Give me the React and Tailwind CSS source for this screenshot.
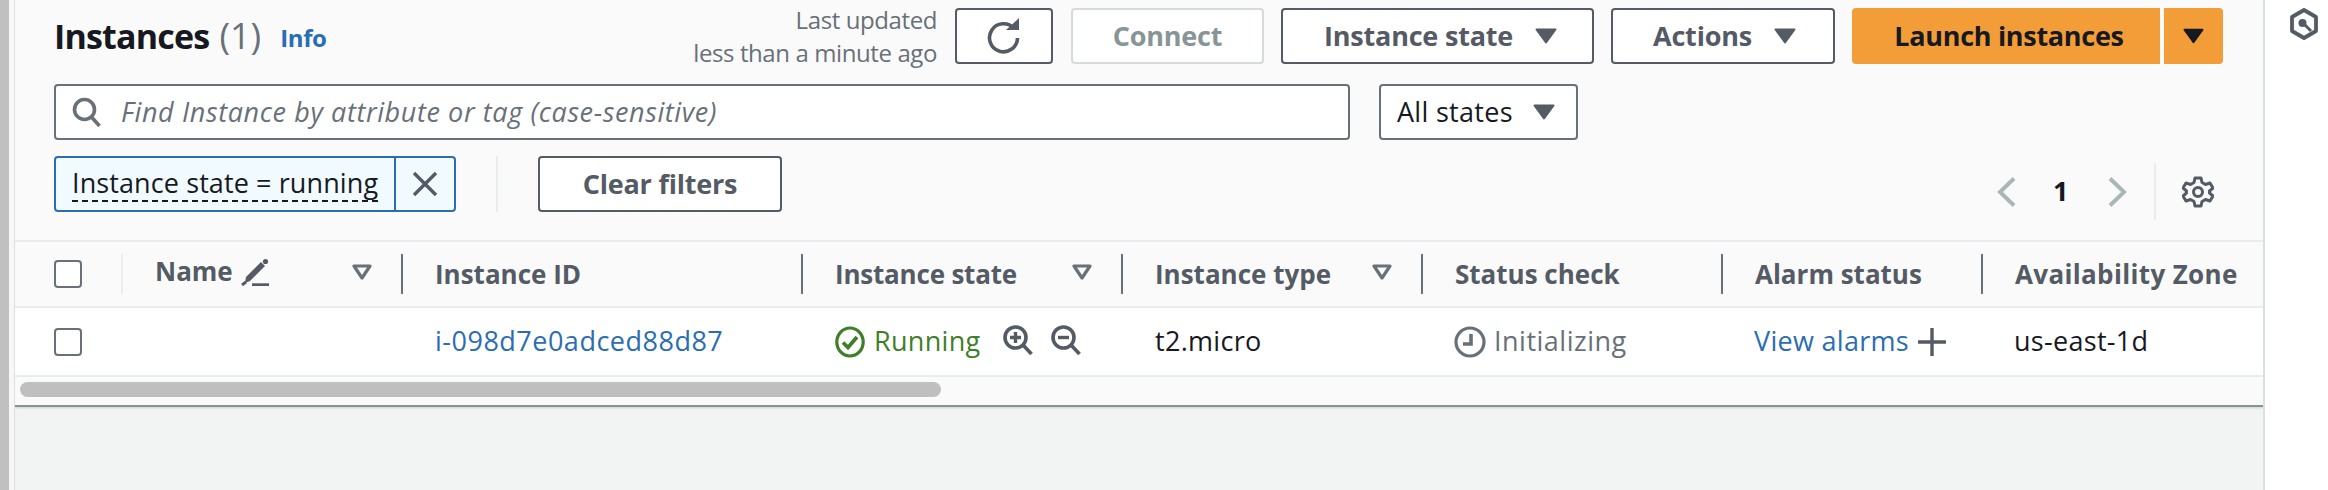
const Caret = ({ className = "", color = "#545b64" }) => (
  <svg viewBox="0 0 22 16" className={`shrink-0 ${className}`}>
    <path d="M1.5 1.5H20.5L11 14.5Z" fill={color} stroke={color} strokeWidth="2" strokeLinejoin="round" />
  </svg>
);

const FilterCaret = () => (
  <svg viewBox="0 0 20 16" className="w-5 h-4 shrink-0">
    <path d="M2 2H18L10 14Z" fill="none" stroke="#687078" strokeWidth="3.2" strokeLinejoin="round" />
  </svg>
);

const Checkbox = () => (
  <span className="block w-[28px] h-[28px] rounded-[4px] border-2 border-[#687078] bg-white" />
);

const Sep = ({ light }) => (
  <span className={`block w-[2px] h-[40px] shrink-0 ${light ? "bg-[#eaeded]" : "bg-[#687078]"}`} />
);

const HeadLabel = ({ children, className = "" }) => (
  <span className={`pl-[32px] text-[26px] font-bold text-[#545b64] whitespace-nowrap ${className}`}>{children}</span>
);

const btn = "h-[56px] shrink-0 flex items-center rounded-[4px] border-2 bg-white text-[27px] font-bold tracking-[-0.2px] whitespace-nowrap";

export default function App() {
  return (
    <div className="w-[2328px] h-[490px] flex overflow-hidden bg-white font-['Open_Sans','Liberation_Sans',sans-serif] text-[#16191f]">
      <div className="w-[9px] shrink-0 bg-[#c0c0c0]" />
      <div className="w-[6px] shrink-0 bg-[#f7f7f7] border-r border-[#dcdfdf]" />
      <main className="w-[2250px] shrink-0 flex flex-col overflow-hidden border-r-2 border-[#dcdfdf] bg-[#f2f3f3]">
        <section className="h-[240px] shrink-0 bg-[#fafafa] pl-[39px] pr-[40px] pt-[8px]">
          <div className="h-[56px] flex items-center">
            <h1 className="text-[34px] font-bold tracking-[-0.8px] leading-none">Instances</h1>
            <span className="ml-[10px] text-[36px] leading-none text-[#687078]">(1)</span>
            <a className="ml-[19px] mt-[4px] text-[24px] font-bold tracking-[-0.4px] text-[#2a6db5]">Info</a>
            <div className="ml-auto text-right text-[24px] tracking-[-0.4px] leading-[33px] text-[#687078]">
              <div>Last updated</div>
              <div>less than a minute ago</div>
            </div>
            <button className={`${btn} ml-[18px] w-[98px] justify-center border-[#545b64]`}>
              <svg viewBox="0 0 36 36" className="w-[36px] h-[36px]">
                <path d="M28 10.5A14 14 0 1 0 31.5 20" fill="none" stroke="#545b64" strokeWidth="3.6" />
                <path d="M20 12H33V0Z" fill="#545b64" />
              </svg>
            </button>
            <button className={`${btn} ml-[18px] w-[193px] justify-center border-[#d5dbdb] text-[#879596]`}>Connect</button>
            <button className={`${btn} ml-[17px] w-[313px] pl-[41px] border-[#545b64] text-[#545b64]`}>
              Instance state
              <Caret className="ml-[22px] w-[22px] h-[16px]" />
            </button>
            <button className={`${btn} ml-[17px] w-[224px] pl-[40px] border-[#545b64] text-[#545b64]`}>
              Actions
              <Caret className="ml-[22px] w-[22px] h-[16px]" />
            </button>
            <div className="ml-[17px] flex gap-[4px]">
              <button className="h-[56px] w-[308px] pl-[6px] flex items-center justify-center rounded-l-[4px] bg-[#f29d38] text-[27px] font-bold tracking-[-0.3px] whitespace-nowrap">
                Launch instances
              </button>
              <button className="h-[56px] w-[59px] flex items-center justify-center rounded-r-[4px] bg-[#f29d38]">
                <Caret color="#16191f" className="w-[21px] h-[16px]" />
              </button>
            </div>
          </div>

          <div className="mt-[20px] h-[56px] flex">
            <div className="w-[1296px] flex items-center rounded-[4px] border-2 border-[#687078] bg-white pl-[16px]">
              <svg viewBox="0 0 30 30" className="w-[30px] h-[30px] shrink-0">
                <circle cx="12.5" cy="12.5" r="10" fill="none" stroke="#687078" strokeWidth="3.6" />
                <path d="M19.5 20L27.5 29" stroke="#687078" strokeWidth="3.6" />
              </svg>
              <span className="ml-[19px] text-[27px] tracking-[0.6px] italic text-[#687078] whitespace-nowrap">
                Find Instance by attribute or tag (case-sensitive)
              </span>
            </div>
            <button className="ml-[29px] w-[199px] flex items-center rounded-[4px] border-2 border-[#687078] bg-white pl-[16px] text-[27px] tracking-[0.3px] whitespace-nowrap">
              All states
              <Caret className="ml-[20px] w-[22px] h-[16px]" />
            </button>
          </div>

          <div className="mt-[16px] h-[56px] flex items-start">
            <div className="w-[402px] h-[56px] flex rounded-[4px] border-2 border-[#2a6db5] bg-[#f1faff]">
              <span className="w-[340px] flex items-center pl-[16px] border-r-2 border-[#2a6db5]">
                <span className="text-[27px] tracking-[0.1px] leading-[34px] whitespace-nowrap border-b-2 border-dashed border-[#16191f]">
                  Instance state = running
                </span>
              </span>
              <span className="flex-1 flex items-center justify-center">
                <svg viewBox="0 0 26 26" className="w-[26px] h-[26px]">
                  <path d="M2 2L24 24M24 2L2 24" stroke="#545b64" strokeWidth="3.4" />
                </svg>
              </span>
            </div>
            <span className="ml-[40px] block w-[2px] h-[56px] bg-[#eaeded]" />
            <button className={`${btn} ml-[40px] w-[244px] justify-center border-[#545b64] text-[#545b64]`}>Clear filters</button>
            <div className="ml-auto mt-[7px] h-[57px] flex items-center">
              <svg viewBox="0 0 19 30" className="w-[19px] h-[30px]">
                <path d="M17 1.5L3 15L17 28.5" fill="none" stroke="#aab7b8" strokeWidth="4" />
              </svg>
              <span className="ml-[37px] w-[16px] text-[27px] font-bold">1</span>
              <svg viewBox="0 0 19 30" className="ml-[39px] w-[19px] h-[30px]">
                <path d="M2 1.5L16 15L2 28.5" fill="none" stroke="#aab7b8" strokeWidth="4" />
              </svg>
              <span className="ml-[27px] block w-[2px] h-[57px] bg-[#eaeded]" />
              <svg viewBox="0 0 32 32" className="ml-[26px] mr-[9px] w-[32px] h-[32px]">
                <path
                  d="M13 2H19L20 6.5L23.5 8.5L28 7L31 12L27.5 15V17L31 20L28 25L23.5 23.5L20 25.5L19 30H13L12 25.5L8.5 23.5L4 25L1 20L4.500 17V15L1 12L4 7L8.500 8.500L12 6.500Z"
                  fill="none" stroke="#545b64" strokeWidth="3" strokeLinejoin="round"
                />
                <circle cx="16" cy="16" r="4.500" fill="none" stroke="#545b64" strokeWidth="3" />
              </svg>
            </div>
          </div>
        </section>

        <div className="border-t-2 border-b-2 border-[#eaeded] bg-[#fafafa] h-[68px] shrink-0 grid grid-cols-[106px_280px_400px_320px_300px_300px_260px_283px] items-center">
          <div className="h-[64px] pl-[39px] flex items-center"><Checkbox /></div>
          <div className="h-[64px] flex items-center">
            <Sep light />
            <span className="pl-[32px] -mt-[5px] text-[26px] font-bold text-[#545b64]">Name</span>
            <svg viewBox="0 0 28 28" className="ml-[8px] -mt-[4px] w-[28px] h-[28px] shrink-0">
              <path d="M20 4L24 8L9 23L4 25L5 19Z" fill="#545b64" />
              <circle cx="24.500" cy="3.500" r="2.600" fill="#545b64" />
              <path d="M11 27H28" stroke="#545b64" strokeWidth="3.400" />
              <path d="M1 27L5 24" stroke="#545b64" strokeWidth="3" />
            </svg>
            <span className="ml-auto mr-[29px] -mt-[4px] flex"><FilterCaret /></span>
          </div>
          <div className="h-[64px] flex items-center"><Sep /><HeadLabel>Instance ID</HeadLabel></div>
          <div className="h-[64px] flex items-center">
            <Sep /><HeadLabel className="tracking-[-0.2px]">Instance state</HeadLabel>
            <span className="ml-auto mr-[29px] -mt-[4px] flex"><FilterCaret /></span>
          </div>
          <div className="h-[64px] flex items-center">
            <Sep /><HeadLabel>Instance type</HeadLabel>
            <span className="ml-auto mr-[29px] -mt-[4px] flex"><FilterCaret /></span>
          </div>
          <div className="h-[64px] flex items-center"><Sep /><HeadLabel>Status check</HeadLabel></div>
          <div className="h-[64px] flex items-center"><Sep /><HeadLabel>Alarm status</HeadLabel></div>
          <div className="h-[64px] flex items-center"><Sep /><HeadLabel className="tracking-[0.35px]">Availability Zone</HeadLabel></div>
        </div>

        <div className="h-[69px] shrink-0 border-b-2 border-[#eaeded] bg-white grid grid-cols-[106px_280px_400px_320px_300px_300px_260px_283px] items-center text-[27px] tracking-[0.3px]">
          <div className="pl-[39px]"><Checkbox /></div>
          <div />
          <a className="pl-[34px] text-[#2a6db5] tracking-[0.5px] whitespace-nowrap">i-098d7e0adced88d87</a>
          <div className="pl-[34px] flex items-center">
            <svg viewBox="0 0 30 32" className="w-[30px] h-[32px] shrink-0">
              <ellipse cx="15" cy="16" rx="13.200" ry="14" fill="none" stroke="#3f7f27" strokeWidth="3.200" />
              <path d="M8 16.500L13 21.500L22 11" fill="none" stroke="#3f7f27" strokeWidth="3.800" />
            </svg>
            <span className="ml-[9px] text-[#3f7f27]">Running</span>
            <svg viewBox="0 0 30 30" className="ml-[23px] -mt-[4px] w-[30px] h-[30px] shrink-0">
              <circle cx="12.500" cy="12.500" r="10.500" fill="none" stroke="#545b64" strokeWidth="3.600" />
              <path d="M20 20L28.500 29" stroke="#545b64" strokeWidth="3.600" />
              <path d="M7 12.500H18M12.500 7V18" stroke="#545b64" strokeWidth="3.400" />
            </svg>
            <svg viewBox="0 0 30 30" className="ml-[18px] -mt-[4px] w-[30px] h-[30px] shrink-0">
              <circle cx="12.500" cy="12.500" r="10.500" fill="none" stroke="#545b64" strokeWidth="3.600" />
              <path d="M20 20L28.500 29" stroke="#545b64" strokeWidth="3.600" />
              <path d="M7 12.500H18" stroke="#545b64" strokeWidth="3.400" />
            </svg>
          </div>
          <div className="pl-[34px]">t2.micro</div>
          <div className="pl-[33px] flex items-center text-[#687078]">
            <svg viewBox="0 0 32 32" className="w-[32px] h-[32px] shrink-0">
              <circle cx="16" cy="16" r="14" fill="none" stroke="#687078" strokeWidth="3.200" />
              <path d="M17 8V18H9" fill="none" stroke="#687078" strokeWidth="3.600" />
            </svg>
            <span className="ml-[8px] tracking-[0.5px]">Initializing</span>
          </div>
          <div className="pl-[33px] flex items-center whitespace-nowrap">
            <a className="text-[#2a6db5]">View alarms</a>
            <svg viewBox="0 0 28 28" className="ml-[9px] w-[28px] h-[28px] shrink-0">
              <path d="M0 14H28M14 0V28" stroke="#545b64" strokeWidth="3.400" />
            </svg>
          </div>
          <div className="pl-[33px]">us-east-1d</div>
        </div>

        <div className="h-[30px] shrink-0 bg-[#fafafa] pl-[5px] pt-[5px] border-b-2 border-[#879596] shadow-[0_1px_2px_rgba(0,0,0,0.15)]">
          <div className="w-[921px] h-[15px] rounded-full bg-[#bfbfbf]" />
        </div>
      </main>
      <aside className="flex-1 pl-[24px] pt-[8px]">
        <svg viewBox="0 0 30 32" className="w-[30px] h-[32px]">
          <path d="M15 2L27 9V23L15 30L3 23V9Z" fill="none" stroke="#545b64" strokeWidth="3.800" strokeLinejoin="round" />
          <circle cx="13.500" cy="15" r="4" fill="#545b64" />
          <path d="M15 16L22 23" stroke="#545b64" strokeWidth="3" />
        </svg>
      </aside>
    </div>
  );
}
